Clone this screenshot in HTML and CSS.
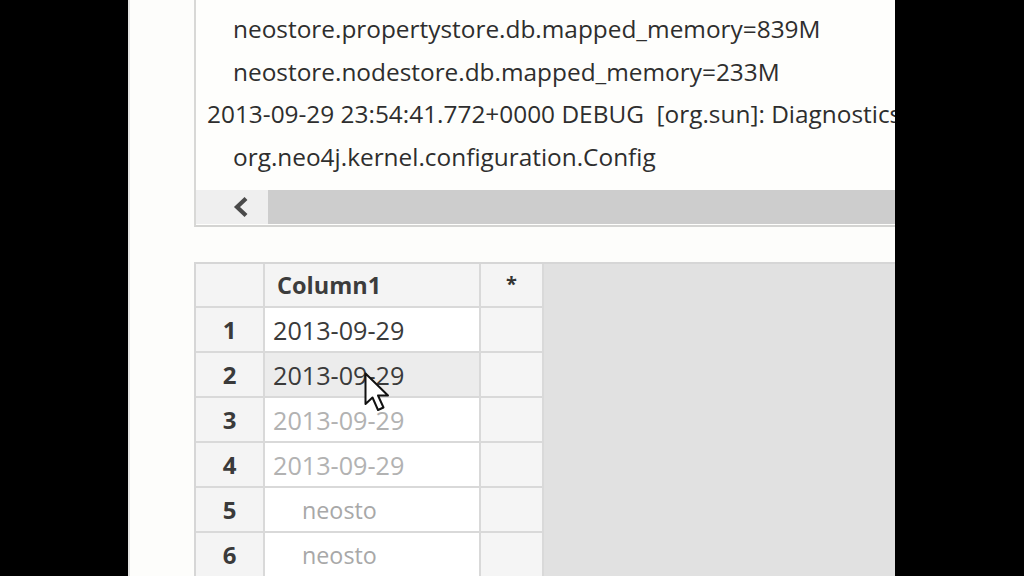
FILE: index.html
```html
<!DOCTYPE html>
<html>
<head>
<meta charset="utf-8">
<link rel="stylesheet" href="styles.css">
</head>
<body>
<div class="screen">
  <div class="window">
    <div class="log">
      <div class="log-lines">
        <div class="line indent">neostore.propertystore.db.mapped_memory=839M</div>
        <div class="line indent">neostore.nodestore.db.mapped_memory=233M</div>
        <div class="line">2013-09-29 23:54:41.772+0000 DEBUG&nbsp;&nbsp;[org.sun]: Diagnostics</div>
        <div class="line indent">org.neo4j.kernel.configuration.Config</div>
      </div>
      <div class="hscroll">
        <div class="hs-btn">
          <svg width="18" height="22" viewBox="0 0 18 22"><path d="M14 2.5 L5 11 L14 19.5" fill="none" stroke="#4a4a4a" stroke-width="4.2" stroke-linejoin="miter"/></svg>
        </div>
        <div class="hs-track"></div>
      </div>
    </div>

    <div class="grid-area">
      <div class="grid">
        <div class="cell hdr corner"></div>
        <div class="cell hdr colhdr">Column1</div>
        <div class="cell hdr star">*</div>

        <div class="cell rownum">1</div>
        <div class="cell data dark">2013-09-29</div>
        <div class="cell extra"></div>

        <div class="cell rownum">2</div>
        <div class="cell data dark hover">2013-09-29</div>
        <div class="cell extra"></div>

        <div class="cell rownum">3</div>
        <div class="cell data light">2013-09-29</div>
        <div class="cell extra"></div>

        <div class="cell rownum">4</div>
        <div class="cell data light">2013-09-29</div>
        <div class="cell extra"></div>

        <div class="cell rownum">5</div>
        <div class="cell data faint">neosto</div>
        <div class="cell extra"></div>

        <div class="cell rownum">6</div>
        <div class="cell data faint">neosto</div>
        <div class="cell extra"></div>
      </div>
      <div class="filler"></div>
    </div>

    <svg class="cursor" width="32" height="44" viewBox="0 0 32 44">
      <path d="M1.5 1.5 L1.5 32 L8.5 25.5 L14 38 L19.5 35.5 L14 23.5 L24 23.5 Z" fill="#fff" stroke="#111" stroke-width="2" stroke-linejoin="round"/>
    </svg>
  </div>
</div>
</body>
</html>
```

FILE: styles.css
```css
html, body {
  margin: 0;
  padding: 0;
  background: #000;
}

.screen {
  width: 1024px;
  height: 576px;
  display: flex;
  background: #000;
  overflow: hidden;
}

.window {
  position: relative;
  margin-left: 128px;
  width: 767px;
  height: 576px;
  background: #fdfdfb;
  border-left: 2px solid #e4e4e2;
  box-sizing: border-box;
  overflow: hidden;
  padding-left: 64px;
  font-family: "Open Sans", "Noto Sans", sans-serif;
}

.log {
  width: 760px;
  height: 227px;
  border-left: 2px solid #d8d8d6;
  border-bottom: 2px solid #d4d4d2;
  box-sizing: border-box;
  display: flex;
  flex-direction: column;
  background: #fefefc;
}

.log-lines {
  flex: 1;
  padding-top: 8px;
  padding-left: 11px;
  color: #2e2e2e;
  font-size: 24.4px;
  white-space: nowrap;
}

.line {
  height: 42.5px;
  line-height: 42.5px;
}

.line.indent {
  padding-left: 26px;
}

.hscroll {
  height: 34px;
  margin-bottom: 1px;
  display: flex;
}

.hs-btn {
  width: 72px;
  background: #efefef;
  display: flex;
  align-items: center;
  padding-left: 36px;
  box-sizing: border-box;
}

.hs-track {
  flex: 1;
  background: #cdcdcd;
}

.grid-area {
  margin-top: 35px;
  display: flex;
  height: 320px;
}

.grid {
  display: grid;
  grid-template-columns: 69px 216px 63px;
  grid-template-rows: 44px;
  grid-auto-rows: 45px;
  border-top: 2px solid #d6d6d6;
  border-left: 2px solid #d6d6d6;
  align-self: flex-start;
}

.cell {
  box-sizing: border-box;
  border-right: 2px solid #d9d9d9;
  border-bottom: 2px solid #d9d9d9;
  display: flex;
  align-items: center;
  white-space: nowrap;
}

.hdr {
  background: #f4f4f4;
}

.colhdr {
  font-weight: 700;
  font-size: 23.5px;
  color: #3c3c3c;
  padding-left: 12px;
}

.star {
  justify-content: center;
  align-items: flex-start;
  padding-top: 6px;
  font-size: 20px;
  font-weight: 700;
  color: #333;
  background: #f4f4f4;
}

.rownum {
  justify-content: center;
  font-weight: 700;
  font-size: 24px;
  color: #3a3a3a;
  background: #f4f4f4;
}

.data {
  background: #fff;
  padding-left: 8px;
  font-size: 25.2px;
}

.data.dark { color: #3a3a3a; }
.data.light { color: #b2b2b2; }
.data.faint { color: #a8a8a8; padding-left: 37px; font-size: 23.3px; }
.data.hover { background: #ececec; }

.extra {
  background: #f5f5f5;
}

.filler {
  flex: 1;
  background: #e1e1e1;
  border-top: 2px solid #d6d6d6;
  height: 320px;
}

.cursor {
  position: absolute;
  left: 234px;
  top: 372px;
}
```
